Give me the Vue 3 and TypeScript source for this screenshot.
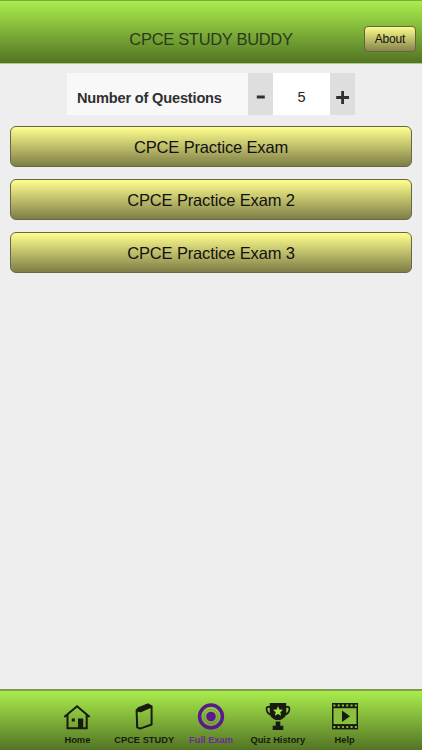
<script setup lang="ts">
import { ref } from 'vue'

type TabId = 'home' | 'study' | 'exam' | 'history' | 'help'

const tabs: { id: TabId; label: string }[] = [
  { id: 'home', label: 'Home' },
  { id: 'study', label: 'CPCE STUDY' },
  { id: 'exam', label: 'Full Exam' },
  { id: 'history', label: 'Quiz History' },
  { id: 'help', label: 'Help' },
]
const exams: string[] = ['CPCE Practice Exam', 'CPCE Practice Exam 2', 'CPCE Practice Exam 3']
const active = ref<TabId>('exam')
const count = ref<number>(5)
const holes: number[] = [2.3, 6.6, 10.9, 15.2, 19.5, 23.8]
</script>

<template>
  <div class="app">
    <header class="header">
      <h1 class="title">CPCE STUDY BUDDY</h1>
      <button class="about">About</button>
    </header>

    <main class="content">
      <div class="stepper">
        <span class="label">Number of Questions</span>
        <button class="step" aria-label="Fewer" @click="count = Math.max(1, count - 1)">
          <svg width="25" height="42" viewBox="0 0 25 42"><path d="M8.8 24h8" stroke="#303030" stroke-width="3" /></svg>
        </button>
        <span class="value">{{ count }}</span>
        <button class="step" aria-label="More" @click="count++">
          <svg width="25" height="42" viewBox="0 0 25 42"><path d="M6.2 24.5h12.8M12.6 18.1v12.8" stroke="#303030" stroke-width="2.8" /></svg>
        </button>
      </div>
      <div class="exams">
        <button v-for="exam in exams" :key="exam" class="exam">{{ exam }}</button>
      </div>
    </main>

    <nav class="tabs">
      <button
        v-for="tab in tabs"
        :key="tab.id"
        class="tab"
        :class="{ active: tab.id === active }"
        @click="active = tab.id"
      >
        <svg class="icon" width="28" height="28" viewBox="0 0 28 28">
          <g v-if="tab.id === 'home'">
            <path d="M1.3 15 14 4.2l12.7 10.8M4.5 12.8v13.4h19.2V12.8" fill="none" stroke="currentColor" stroke-width="2" />
            <path d="M15 16.5h5.2V26H15zM8.8 16.5h3v3h-3z" fill="currentColor" />
          </g>
          <g v-else-if="tab.id === 'study'">
            <path d="m6.6 8.2.6 17.2 3 1.2 11.4-4.1V4.5L10.4 9.4Z" fill="none" stroke="currentColor" stroke-width="2" stroke-linejoin="round" />
            <path d="M5.8 8.4 7.6 5.6l10.6-4.4L22.4 4 10.6 9.8Z" fill="currentColor" />
          </g>
          <g v-else-if="tab.id === 'exam'">
            <circle cx="14" cy="14.5" r="11.4" fill="none" stroke="currentColor" stroke-width="3.5" />
            <circle cx="14" cy="14.5" r="7" fill="none" stroke="currentColor" stroke-opacity=".25" stroke-width="1" />
            <circle cx="14" cy="14.5" r="4.8" fill="currentColor" />
          </g>
          <g v-else-if="tab.id === 'history'">
            <path d="M7 4.8H3.9C2.3 4.8 2.5 7 2.8 8.5c.7 2.7 2.5 4.1 5.3 4.1M21 4.8h3.1c1.6 0 1.4 2.2 1.1 3.7-.7 2.7-2.5 4.1-5.3 4.1" fill="none" stroke="currentColor" stroke-width="1.7" />
            <path d="M5.8 1h16.4v9.4c0 4-2.9 6.7-6.6 7.6h-3.2c-3.7-.9-6.6-3.6-6.6-7.6Z" fill="currentColor" />
            <path d="M11.7 19.6h4.6v4.2h3V28H8.7v-4.2h3Z" fill="currentColor" />
            <path class="star" d="m14 4.1 1.4 3.3 3.6.4-2.7 2.4.8 3.5-3.1-1.8-3.1 1.8.8-3.5L9 7.8l3.6-.4Z" />
          </g>
          <g v-else>
            <path d="M1 1h26v26.4H1Z" fill="currentColor" />
            <path class="film" d="M2.5 6.2h23v15.9h-23z" />
            <g class="film">
              <rect v-for="x in holes" :key="x" :x="x" y="2.4" width="2.1" height="2" rx=".4" />
              <rect v-for="x in holes" :key="x + 100" :x="x" y="24" width="2.1" height="2" rx=".4" />
            </g>
            <path d="M11 8.4v11.6l8-5.8Z" fill="currentColor" />
          </g>
        </svg>
        <span class="tab-label">{{ tab.label }}</span>
      </button>
    </nav>
  </div>
</template>

<style>
body {
  margin: 0;
  background: #eee;
}
</style>

<style scoped>
.app {
  display: flex;
  flex-direction: column;
  height: 750px;
  overflow: hidden;
  background: #eeeeef;
  font-family: "Liberation Sans", Arial, sans-serif;
}
button {
  margin: 0;
  padding: 0;
  border: 0;
  font-family: inherit;
  box-sizing: border-box;
}
.header {
  display: grid;
  grid-template-columns: 1fr auto 1fr;
  height: 64px;
  box-sizing: border-box;
  border-top: 1px solid #7fa93f;
  border-bottom: 1px solid #a9c985;
  background: linear-gradient(#aaed4c, #527424);
}
.title {
  grid-column: 2;
  margin: 0;
  padding-top: 28px;
  font-size: 16.5px;
  letter-spacing: -0.32px;
  line-height: 20px;
  font-weight: 400;
  color: #2b3a1c;
  white-space: nowrap;
}
.about {
  justify-self: end;
  width: 52px;
  height: 26px;
  margin: 25px 6px 0 0;
  border: 1px solid #67653f;
  border-radius: 4px;
  background: linear-gradient(#fdfd8c, #85854b);
  font-size: 12px;
  letter-spacing: -0.2px;
  color: #111;
}
.content {
  flex: 1;
  padding: 9px 10px 0;
}
.stepper {
  display: flex;
  width: 288px;
  height: 42px;
  margin: 0 auto;
}
.label {
  width: 181px;
  padding-left: 10px;
  box-sizing: border-box;
  background: #f8f8f8;
  font-size: 14.6px;
  letter-spacing: -0.19px;
  font-weight: 700;
  line-height: 51px;
  color: #303030;
  white-space: nowrap;
}
.step {
  width: 25px;
  background: #dedede;
}
.step svg {
  display: block;
}
.value {
  width: 57px;
  background: #fff;
  text-align: center;
  font-size: 14.5px;
  line-height: 49px;
  color: #222;
}
.exams {
  display: flex;
  flex-direction: column;
  gap: 12px;
  margin-top: 11px;
}
.exam {
  height: 41px;
  padding-top: 2px;
  border: 1px solid #66664a;
  border-radius: 6px;
  background: linear-gradient(#ffff8e, #7e7e47);
  font-size: 16.5px;
  letter-spacing: -0.15px;
  color: #111;
}
.tabs {
  display: flex;
  justify-content: center;
  height: 61px;
  box-sizing: border-box;
  border-top: 2px solid #7d9c52;
  background: linear-gradient(#aaed4c, #527424);
}
.tab {
  display: flex;
  flex-direction: column;
  align-items: center;
  width: 66.8px;
  padding-top: 11px;
  background: none;
  color: #171b10;
}
.tab.active {
  color: #5b1a8c;
}
.icon {
  flex: none;
}
.tab-label {
  margin-top: 4px;
  font-size: 9.3px;
  line-height: 12px;
  font-weight: 700;
  white-space: nowrap;
}
.tab.active .tab-label {
  color: #6d2a9a;
}
.star {
  fill: #a0df48;
}
.film {
  fill: #8bc03f;
}
</style>
